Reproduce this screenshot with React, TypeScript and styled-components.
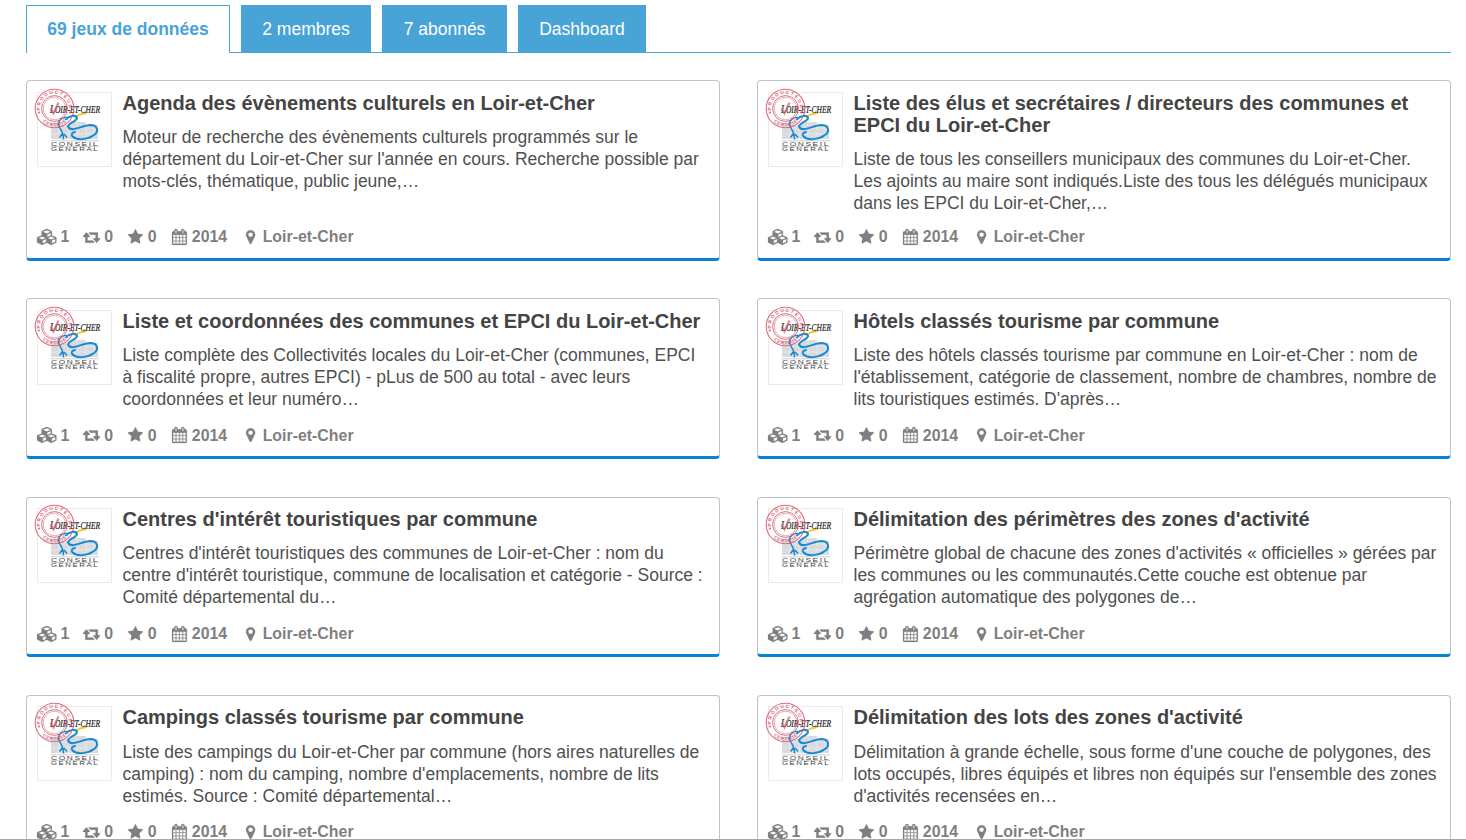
import React from 'react';
import styled, { createGlobalStyle } from 'styled-components';

const GlobalStyle = createGlobalStyle`
  * { box-sizing: border-box; }
  html, body { margin: 0; padding: 0; background: #fff; }
  body {
    height: 840px;
    overflow: hidden;
    font-family: Arial, "Liberation Sans", sans-serif;
    color: #444;
  }
  h4, p { margin: 0; }
`;

const Page = styled.main`
  height: 840px;
  overflow: hidden;
  padding: 5px 15px 0 26px;
  border-bottom: 1px solid #a9a9ab;
`;

const Tabs = styled.nav`
  display: flex;
  gap: 11px;
  height: 48px;
  border-bottom: 1px solid #48a3d7;
`;

const Tab = styled.a<{ $width: number; $active?: boolean }>`
  width: ${p => p.$width}px;
  height: 48px;
  display: flex;
  justify-content: center;
  border: 1px solid #48a3d7;
  border-bottom: ${p => (p.$active ? '0' : '1px solid #48a3d7')};
  background: ${p => (p.$active ? '#fff' : '#48a3d7')};
  color: ${p => (p.$active ? '#48a3d7' : '#fff')};
  font-size: 17.5px;
  font-weight: ${p => (p.$active ? 700 : 400)};
  line-height: 46px;
  white-space: nowrap;
`;

const Grid = styled.section`
  display: grid;
  grid-template-columns: 694px 694px;
  grid-template-rows: 180.6px repeat(3, 160.4px);
  gap: 37.8px 37px;
  padding-top: 27px;
`;

const Card = styled.article`
  display: flex;
  flex-direction: column;
  justify-content: space-between;
  border: 1px solid #c3c3c3;
  border-bottom: 3px solid #0a82d4;
  border-radius: 4px;
  padding: 10.6px 10px 9.2px;
`;

const Body = styled.div`
  display: flex;
  gap: 10.5px;
`;

const LogoFrame = styled.div`
  position: relative;
  flex: none;
  width: 75px;
  height: 75px;
  border: 1px solid #ebebeb;
`;

const LogoArt = styled.svg`
  position: absolute;
  left: -4px;
  top: -5px;
  overflow: visible;
`;

const Title = styled.h4`
  font-size: 20px;
  line-height: 22px;
  font-weight: 700;
  color: #444;
  white-space: nowrap;
`;

const Description = styled.p`
  margin-top: 12.25px;
  font-size: 17.5px;
  line-height: 22px;
  color: #505050;
  white-space: nowrap;
`;

const Line = styled.span`
  display: block;
`;

const Meta = styled.div`
  display: flex;
  height: 22px;
  font-size: 15.9px;
  line-height: 22px;
  font-weight: 700;
  color: #7f7f7f;
`;

const MetaItem = styled.span<{ $width?: number; $gap?: number }>`
  display: flex;
  width: ${p => (p.$width ? `${p.$width}px` : 'auto')};
  gap: ${p => p.$gap ?? 4}px;
  svg {
    flex: none;
    margin-top: 2.8px;
    height: 16px;
    fill: currentColor;
    stroke: currentColor;
    stroke-width: 22;
  }
`;

const icons = {
  cubes: {
    w: 2304,
    d: 'M640 1632l384-192v-314l-384 164v342zm-64-454l404-173-404-173-404 173zm1088 454l384-192v-314l-384 164v342zm-64-454l404-173-404-173-404 173zm-448-293l384-165v-266l-384 164v267zm-64-379l441-189-441-189-441 189zm1088 518v416q0 36-19 67t-52 47l-448 224q-25 14-57 14t-57-14l-448-224q-4-2-7-4-2 2-7 4l-448 224q-25 14-57 14t-57-14l-448-224q-33-16-52-47t-19-67v-416q0-38 21.5-70t56.500-48l434-186v-400q0-38 21.500-70t56.500-48l448-192q23-10 50-10t50 10l448 192q35 16 56.500 48t21.500 70v400l434 186q36 16 57 48t21 70z',
  },
  retweet: {
    w: 1920,
    d: 'M1280 1504q0 13-9.500 22.500t-22.500 9.500h-960q-8 0-13.500-2t-9-7-5.500-8-3-11.500-1-11.500v-600h-192q-26 0-45-19t-19-45q0-24 15-41l320-384q19-22 49-22t49 22l320 384q15 17 15 41 0 26-19 45t-45 19h-192v384h576q16 0 25 11l160 192q7 10 7 21zm640-416q0 24-15 41l-320 384q-20 23-49 23t-49-23l-320-384q-15-17-15-41 0-26 19-45t45-19h192v-384h-576q-16 0-25-12l-160-192q-7-9-7-20 0-13 9.500-22.500t22.500-9.500h960q8 0 13.500 2t9 7 5.500 8 3 11.500 1 11.500v600h192q26 0 45 19t19 45z',
  },
  star: {
    w: 1664,
    d: 'M1664 647q0 22-26 48l-363 354 86 500q1 7 1 20 0 21-10.500 35.500t-30.500 14.500q-19 0-40-12l-449-236-449 236q-22 12-40 12-21 0-31.500-14.500t-10.500-35.500q0-6 2-20l86-500-364-354q-25-27-25-48 0-37 56-46l502-73 225-455q19-41 49-41t49 41l225 455 502 73q56 9 56 46z',
  },
  calendar: {
    w: 1664,
    d: 'M128 1664h288v-288h-288v288zm352 0h320v-288h-320v288zm-352-352h288v-320h-288v320zm352 0h320v-320h-320v320zm-352-384h288v-288h-288v288zm736 736h320v-288h-320v288zm-384-736h320v-288h-320v288zm768 736h288v-288h-288v288zm-384-352h320v-320h-320v320zm-352-864v-288q0-13-9.500-22.500t-22.500-9.500h-64q-13 0-22.500 9.500t-9.500 22.500v288q0 13 9.500 22.500t22.500 9.500h64q13 0 22.500-9.500t9.500-22.500zm736 864h288v-320h-288v320zm-384-384h320v-288h-320v288zm384 0h288v-288h-288v288zm32-480v-288q0-13-9.500-22.500t-22.500-9.500h-64q-13 0-22.500 9.500t-9.500 22.500v288q0 13 9.500 22.500t22.500 9.500h64q13 0 22.500-9.500t9.500-22.500zm384-64v1280q0 52-38 90t-90 38h-1408q-52 0-90-38t-38-90v-1280q0-52 38-90t90-38h128v-96q0-66 47-113t113-47h64q66 0 113 47t47 113v96h384v-96q0-66 47-113t113-47h64q66 0 113 47t47 113v96h128q52 0 90 38t38 90z',
  },
  marker: {
    w: 1024,
    d: 'M768 640q0-106-75-181t-181-75-181 75-75 181 75 181 181 75 181-75 75-181zm256 0q0 109-33 179l-364 774q-16 33-47.500 52t-67.500 19-67.500-19-46.500-52l-365-774q-33-70-33-179 0-212 150-362t362-150 362 150 150 362z',
  },
};

function Icon({ name }: { name: keyof typeof icons }) {
  const { w, d } = icons[name];
  return (
    <svg viewBox={`0 0 ${w} 1792`} width={(w * 16) / 1792} height={16} overflow="visible" aria-hidden="true">
      <path d={d} />
    </svg>
  );
}

function Logo({ id }: { id: number }) {
  return (
    <LogoFrame>
      <LogoArt width="80" height="80" viewBox="0 0 80 80">
        <path d="M17 35l10-1 3 4 11-4h10l3 3h10v14H17z" fill="#d9dadd" />
        <path d="M17 40H65M17 46H65M25 34V51M34 36V51M43 34V51M52 34V51M60 36V51" stroke="#ececef" strokeWidth="0.7" />
        <path d="M39 29l7-3.500 8-1.800-2.200 2.600-5.500 1-5 2.400z" fill="#f8c51c" />
        <path d="M33 29.500C28 29 24.500 32 24.500 36c0 4 4 6 4.500 11" fill="none" stroke="#168bd4" strokeWidth="1.500" />
        <path d="M32 31.500c3-4 10-5 11-1.500 0 3.500-8 4-9 8.500 3 6.500 14-1 22-1.500 8 0 9 6.500 4 10-6 4.500-17 6-21.500 1.500-2-2.500 0-4 2.500-4.500" fill="none" stroke="#168bd4" strokeWidth="2" strokeLinecap="round" />
        <path d="M28.500 45.500l-3 4M29 46l.5 5.500M30 46l3 3.500" fill="none" stroke="#168bd4" strokeWidth="1.500" />
        <text x="16" y="25" fontFamily="Liberation Serif, serif" fontStyle="italic" fontSize="12" fill="#222" stroke="#222" strokeWidth="0.2" textLength="50" lengthAdjust="spacingAndGlyphs">
          L<tspan fontSize="10">OIR-ET-CHER</tspan>
        </text>
        <path d="M16.500 52.800H65M16.500 58.400H65" stroke="#aaa" strokeWidth="0.6" />
        <g fontFamily="Liberation Sans, sans-serif" fontSize="5.200" fill="#444">
          <text x="17" y="57.700" textLength="48" lengthAdjust="spacingAndGlyphs" letterSpacing="1">CONSEIL</text>
          <text x="17" y="63" textLength="48" lengthAdjust="spacingAndGlyphs" letterSpacing="1">GENERAL</text>
        </g>
        <g fill="none" stroke="#d4596b" opacity="0.85">
          <circle cx="20.500" cy="20.500" r="19.300" strokeWidth="1.100" />
          <circle cx="20.500" cy="20.500" r="12.900" strokeWidth="1" />
          <circle cx="20.500" cy="20.500" r="11.300" strokeWidth="0.600" />
          <path d="M16.500 20.500l3 5 5-11" strokeWidth="2.200" opacity="0.8" />
        </g>
        <g fill="#d4596b">
          <circle cx="5" cy="24.500" r="0.900" />
          <circle cx="36" cy="24.500" r="0.900" />
        </g>
        <path id={`stamp-top-${id}`} d="M6.400 22.500A14.300 14.300 0 1 1 34.600 22.500" fill="none" />
        <path id={`stamp-bottom-${id}`} d="M7.800 33.200A18 18 0 0 0 33.200 33.200" fill="none" />
        <g fontFamily="Liberation Sans, sans-serif" fontSize="4.800" fontWeight="700" fill="#d4596b" opacity="0.9">
          <text><textPath href={`#stamp-top-${id}`} textLength="47">PRODUCTEUR</textPath></text>
          <text><textPath href={`#stamp-bottom-${id}`} startOffset="1" textLength="26">CERTIFIÉ</textPath></text>
        </g>
      </LogoArt>
    </LogoFrame>
  );
}

const datasets = [
  {
    title: ['Agenda des évènements culturels en Loir-et-Cher'],
    text: ['Moteur de recherche des évènements culturels programmés sur le', "département du Loir-et-Cher sur l'année en cours. Recherche possible par", 'mots-clés, thématique, public jeune,…'],
  },
  {
    title: ['Liste des élus et secrétaires / directeurs des communes et', 'EPCI du Loir-et-Cher'],
    text: ['Liste de tous les conseillers municipaux des communes du Loir-et-Cher.', 'Les ajoints au maire sont indiqués.Liste des tous les délégués municipaux', 'dans les EPCI du Loir-et-Cher,…'],
  },
  {
    title: ['Liste et coordonnées des communes et EPCI du Loir-et-Cher'],
    text: ['Liste complète des Collectivités locales du Loir-et-Cher (communes, EPCI', 'à fiscalité propre, autres EPCI) - pLus de 500 au total - avec leurs', 'coordonnées et leur numéro…'],
  },
  {
    title: ['Hôtels classés tourisme par commune'],
    text: ['Liste des hôtels classés tourisme par commune en Loir-et-Cher : nom de', "l'établissement, catégorie de classement, nombre de chambres, nombre de", "lits touristiques estimés. D'après…"],
  },
  {
    title: ["Centres d'intérêt touristiques par commune"],
    text: ["Centres d'intérêt touristiques des communes de Loir-et-Cher : nom du", "centre d'intérêt touristique, commune de localisation et catégorie - Source :", 'Comité départemental du…'],
  },
  {
    title: ["Délimitation des périmètres des zones d'activité"],
    text: ["Périmètre global de chacune des zones d'activités « officielles » gérées par", 'les communes ou les communautés.Cette couche est obtenue par', 'agrégation automatique des polygones de…'],
  },
  {
    title: ['Campings classés tourisme par commune'],
    text: ['Liste des campings du Loir-et-Cher par commune (hors aires naturelles de', "camping) : nom du camping, nombre d'emplacements, nombre de lits", 'estimés. Source : Comité départemental…'],
  },
  {
    title: ["Délimitation des lots des zones d'activité"],
    text: ["Délimitation à grande échelle, sous forme d'une couche de polygones, des", "lots occupés, libres équipés et libres non équipés sur l'ensemble des zones", "d'activités recensées en…"],
  },
];

export default function App() {
  return (
    <>
      <GlobalStyle />
      <Page>
        <Tabs>
          <Tab $width={204} $active>69 jeux de données</Tab>
          <Tab $width={130}>2 membres</Tab>
          <Tab $width={125}>7 abonnés</Tab>
          <Tab $width={128}>Dashboard</Tab>
        </Tabs>
        <Grid>
          {datasets.map((item, i) => (
            <Card key={i}>
              <Body>
                <Logo id={i} />
                <div>
                  <Title>{item.title.map(l => <Line key={l}>{l}</Line>)}</Title>
                  <Description>{item.text.map(l => <Line key={l}>{l}</Line>)}</Description>
                </div>
              </Body>
              <Meta>
                <MetaItem $width={46} $gap={3}><Icon name="cubes" />1</MetaItem>
                <MetaItem $width={45}><Icon name="retweet" />0</MetaItem>
                <MetaItem $width={44} $gap={5}><Icon name="star" />0</MetaItem>
                <MetaItem $width={74} $gap={5}><Icon name="calendar" />2014</MetaItem>
                <MetaItem $gap={7.5}><Icon name="marker" />Loir-et-Cher</MetaItem>
              </Meta>
            </Card>
          ))}
        </Grid>
      </Page>
    </>
  );
}
